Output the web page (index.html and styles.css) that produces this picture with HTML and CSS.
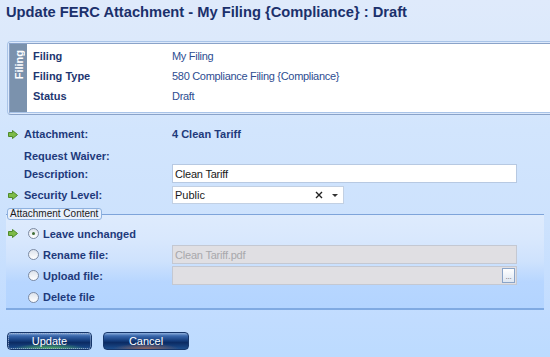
FILE: index.html
```html
<!DOCTYPE html>
<html lang="en">
<head>
    <meta charset="UTF-8">
    <meta name="viewport" content="width=device-width, initial-scale=1.0">
    <title>Update FERC Attachment</title>
    <link rel="stylesheet" href="styles.css">
</head>
<body>
    <div class="header">
        <h1 class="title">Update FERC Attachment - My Filing {Compliance} : Draft</h1>
    </div>

    <div class="filing">
        <div class="filing-body">
            <div class="filing-tab"><span>Filing</span></div>
            <div class="filing-info">
                <div class="info-label">Filing</div>
                <div class="info-value">My Filing</div>
                <div class="info-label">Filing Type</div>
                <div class="info-value">580 Compliance Filing {Compliance}</div>
                <div class="info-label">Status</div>
                <div class="info-value">Draft</div>
            </div>
        </div>
    </div>

    <div class="form">
        <div class="row row-attachment">
            <span class="mark">
                <svg width="10" height="9" viewBox="0 0 10 9"><path d="M0.5 2.5H4.5V0.5L9.5 4.5L4.5 8.5V6.5H0.5Z" fill="#7dbb48" stroke="#4f8a2b" stroke-width="1" stroke-linejoin="round"/></svg>
            </span>
            <span class="label">Attachment:</span>
            <span class="value">4 Clean Tariff</span>
        </div>
        <div class="row row-waiver">
            <span class="mark"></span>
            <span class="label">Request Waiver:</span>
        </div>
        <div class="row row-description">
            <span class="mark"></span>
            <span class="label">Description:</span>
            <div class="text-input">Clean Tariff</div>
        </div>
        <div class="row row-security">
            <span class="mark">
                <svg width="10" height="9" viewBox="0 0 10 9"><path d="M0.5 2.5H4.5V0.5L9.5 4.5L4.5 8.5V6.5H0.5Z" fill="#7dbb48" stroke="#4f8a2b" stroke-width="1" stroke-linejoin="round"/></svg>
            </span>
            <span class="label">Security Level:</span>
            <div class="select">
                <span class="select-text">Public</span>
                <svg class="select-clear" width="8" height="8" viewBox="0 0 8 8"><path d="M1 1L7 7M7 1L1 7" stroke="#222" stroke-width="1.4"/></svg>
                <span class="select-caret"></span>
            </div>
        </div>
    </div>

    <fieldset class="group">
        <legend>Attachment Content</legend>
        <div class="choice">
            <span class="mark">
                <svg width="10" height="9" viewBox="0 0 10 9"><path d="M0.5 2.5H4.5V0.5L9.5 4.5L4.5 8.5V6.5H0.5Z" fill="#7dbb48" stroke="#4f8a2b" stroke-width="1" stroke-linejoin="round"/></svg>
            </span>
            <span class="radio checked"></span>
            <span class="choice-label">Leave unchanged</span>
        </div>
        <div class="choice">
            <span class="mark"></span>
            <span class="radio"></span>
            <span class="choice-label">Rename file:</span>
            <div class="text-input disabled">Clean Tariff.pdf</div>
        </div>
        <div class="choice">
            <span class="mark"></span>
            <span class="radio"></span>
            <span class="choice-label">Upload file:</span>
            <div class="text-input disabled file-input">
                <span class="browse">...</span>
            </div>
        </div>
        <div class="choice choice-last">
            <span class="mark"></span>
            <span class="radio"></span>
            <span class="choice-label">Delete file</span>
        </div>
    </fieldset>

    <div class="actions">
        <button class="btn btn-update">Update</button>
        <button class="btn btn-cancel">Cancel</button>
    </div>
</body>
</html>
```

FILE: styles.css
```css
body {
    margin: 0;
    min-height: 357px;
    font-family: "Liberation Sans", Arial, sans-serif;
    font-size: 11px;
    color: #1e3a7b;
    background: linear-gradient(#dfeafb 0, #dce9fb 40px, #d2e5fd 130px, #cde2fd 220px, #c1dcff 320px, #bcdbff 357px);
}

.header {
    height: 41px;
    padding: 4px 0 0 6px;
    box-sizing: border-box;
}

.title {
    margin: 0;
    font-size: 14.7px;
    line-height: 17px;
    font-weight: bold;
    color: #1b306b;
}

/* filing summary box */
.filing {
    margin-left: 7px;
    border: 1px solid #a9c4e8;
    border-bottom-color: #8aa3c9;
    border-right: 0;
    border-radius: 4px 0 0 4px;
    padding: 1px 0 1px 1px;
    background: #dde9fb;
}

.filing-body {
    display: flex;
    height: 68px;
    border: 1px solid #8aa3c9;
    border-bottom-color: #a9c4e8;
    border-right: 0;
    background: #fff;
}

.filing-tab {
    width: 17px;
    background: #7b92ad;
    display: flex;
    justify-content: center;
    align-items: flex-start;
    padding-top: 6px;
    box-sizing: border-box;
}

.filing-tab span {
    writing-mode: vertical-rl;
    transform: rotate(180deg);
    color: #fff;
    font-weight: bold;
}

.filing-info {
    flex: 1;
    display: grid;
    grid-template-columns: 139px 1fr;
    grid-auto-rows: 20px;
    align-items: center;
    align-content: start;
    padding: 2px 0 0 6px;
}

.info-label {
    font-weight: bold;
    color: #1d3671;
}

.info-value {
    color: #2d4d91;
    letter-spacing: -0.3px;
}

/* main form */
.form {
    padding: 8px 0 0 8px;
}

.row {
    display: flex;
    align-items: center;
}

.row-attachment { height: 22px; }
.row-waiver { height: 19px; padding-top: 3px; box-sizing: border-box; }
.row-description { height: 19px; }
.row-security { height: 18px; margin-top: 3px; }

.mark {
    width: 16px;
    display: flex;
    align-items: center;
}

.label {
    width: 148px;
    font-weight: bold;
}

.value {
    font-weight: bold;
}

.text-input {
    width: 345px;
    height: 19px;
    box-sizing: border-box;
    border: 1px solid #b7c9e2;
    background: #fff;
    padding: 0 2px;
    display: flex;
    align-items: center;
    color: #1a1a1a;
    letter-spacing: -0.2px;
}

.text-input.disabled {
    background: #e0dfe3;
    border-color: #c4c8d2;
    color: #a8a8ac;
}

.file-input {
    justify-content: flex-end;
    padding: 0 1px;
}

.browse {
    width: 13px;
    height: 15px;
    box-sizing: border-box;
    border: 1px solid #8aa4c8;
    background: linear-gradient(#fff, #dfe7f2);
    font-size: 8px;
    line-height: 16px;
    text-align: center;
    color: #666;
    overflow: hidden;
}

.select {
    width: 172px;
    height: 18px;
    box-sizing: border-box;
    border: 1px solid #c2d0e3;
    background: #fff;
    display: flex;
    align-items: center;
    padding: 0 5px 0 2px;
    color: #1a1a1a;
}

.select-text {
    flex: 1;
}

.select-clear {
    margin-right: 9px;
}

.select-caret {
    width: 0;
    height: 0;
    border-left: 3px solid transparent;
    border-right: 3px solid transparent;
    border-top: 3px solid #333;
}

/* attachment content group */
.group {
    margin: 4px 6px 0 6px;
    padding: 4px 0 1px 0;
    min-width: 0;
    border: 0;
    border-top: 1px solid #7ea4da;
    border-bottom: 2px solid #80aae2;
    background: linear-gradient(#deebfd 0, #d9e8fd 25%, #cee2fd 50%, #b7d6ff 72%, #b3d4ff 100%);
}

.group legend {
    margin-left: 1px;
    padding: 0 3px 0 2px;
    height: 12px;
    box-sizing: border-box;
    border: 1px solid #8eb1de;
    border-radius: 3px;
    background: #e8f0fd;
    font-size: 10px;
    line-height: 10px;
    color: #1b1b1b;
}

.choice {
    display: flex;
    align-items: center;
    height: 19px;
    margin: 2px 0 0 2px;
}

.choice:first-of-type {
    margin-top: 0;
}

.choice-last {
    height: 20px;
}

.choice .mark {
    width: 19px;
}

.radio {
    width: 11px;
    height: 11px;
    box-sizing: border-box;
    margin: 0 4px 0 1px;
    border: 1px solid #7c8aa2;
    border-radius: 50%;
    background: linear-gradient(#dde3ec, #fff);
    display: flex;
    align-items: center;
    justify-content: center;
}

.radio.checked::after {
    content: "";
    width: 3px;
    height: 3px;
    border-radius: 50%;
    background: #3f6d35;
}

.choice-label {
    width: 129px;
    font-weight: bold;
}

/* buttons */
.actions {
    display: flex;
    gap: 11px;
    padding: 22px 0 0 7px;
}

.btn {
    width: 85px;
    height: 18px;
    padding: 0;
    border: 1px solid #17366a;
    border-radius: 4px;
    color: #fff;
    font-family: "Liberation Sans", Arial, sans-serif;
    font-size: 11px;
    cursor: pointer;
    background: linear-gradient(#8fb0dd 0, #3a68ad 18%, #143c7c 48%, #0b2b63 60%, #1d4f8f 100%);
}

.btn-update {
    outline: 1px dotted #9fb3d3;
    outline-offset: -2px;
    background: radial-gradient(ellipse 45% 35% at 50% 100%, rgba(90, 190, 90, 0.9), transparent), linear-gradient(#8fb0dd 0, #3a68ad 18%, #143c7c 48%, #0b2b63 60%, #1d4f8f 100%);
}

.btn-cancel {
    width: 86px;
    background: radial-gradient(ellipse 40% 35% at 50% 100%, rgba(170, 110, 90, 0.85), transparent), linear-gradient(#8fb0dd 0, #3a68ad 18%, #143c7c 48%, #0b2b63 60%, #1d4f8f 100%);
}
```
